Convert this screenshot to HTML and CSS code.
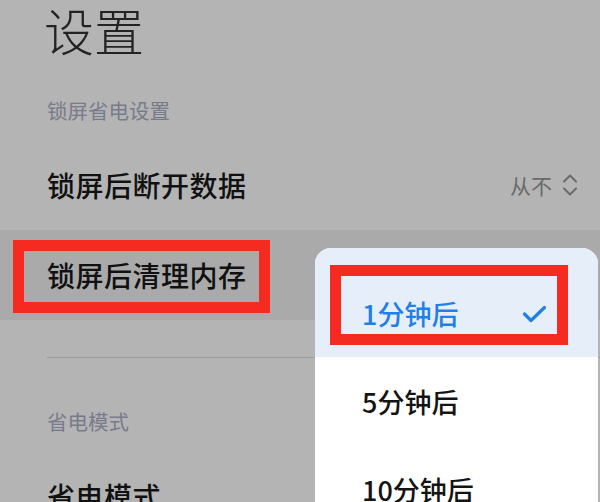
FILE: index.html
```html
<!DOCTYPE html>
<html lang="zh-CN">
<head>
<meta charset="utf-8">
<title>设置</title>
<link rel="stylesheet" href="styles.css">
</head>
<body>
<div class="page">
  <div class="title">设置</div>
  <div class="section-label">锁屏省电设置</div>
  <div class="row">
    <span class="row-text">锁屏后断开数据</span>
    <span class="row-value">从不
      <svg class="chev" width="16" height="24" viewBox="0 0 16 24"><path d="M2 8.5 L8 2.5 L14 8.5 M2 15.5 L8 21.5 L14 15.5" fill="none" stroke="#6a6a6a" stroke-width="2" stroke-linecap="round" stroke-linejoin="round"/></svg>
    </span>
  </div>
  <div class="row row-active">
    <span class="row-text">锁屏后清理内存</span>
  </div>
  <div class="divider"></div>
  <div class="section-label section-label-2">省电模式</div>
  <div class="row">
    <span class="row-text">省电模式</span>
  </div>

  <div class="popup">
    <div class="item item-selected">
      <span>1分钟后</span>
      <svg class="check" width="25" height="18" viewBox="0 0 25 18"><path d="M2.5 9 L9 15.5 L22.5 2.5" fill="none" stroke="#1f80e8" stroke-width="3.2" stroke-linecap="round" stroke-linejoin="round"/></svg>
    </div>
    <div class="item"><span>5分钟后</span></div>
    <div class="item"><span>10分钟后</span></div>
  </div>

  <div class="mark mark-1"></div>
  <div class="mark mark-2"></div>
</div>
</body>
</html>
```
FILE: styles.css
```css
html, body {
  margin: 0;
  padding: 0;
}
body {
  font-family: "Noto Sans CJK SC", "Noto Sans", sans-serif;
}
.page {
  position: relative;
  width: 600px;
  height: 502px;
  overflow: hidden;
  background: #b4b4b4;
}
.title {
  height: 64px;
  line-height: 58px;
  padding-left: 44px;
  font-size: 50px;
  font-weight: 300;
  color: #232323;
}
.section-label {
  margin-top: 30px;
  margin-bottom: 14px;
  height: 32px;
  line-height: 32px;
  padding-left: 47px;
  font-size: 20.5px;
  color: #777b8c;
}
.section-label-2 {
  margin-top: 47px;
}
.row {
  height: 90px;
  display: flex;
  align-items: center;
  justify-content: space-between;
  padding: 0 22px 0 47px;
}
.row-active {
  background: #aaaaaa;
}
.row-text {
  font-size: 28px;
  font-weight: 500;
  letter-spacing: 0.5px;
  color: #111111;
}
.row-value {
  display: flex;
  align-items: center;
  gap: 10px;
  font-size: 21px;
  color: #6a6a6a;
}
.divider {
  margin: 37px 0 0 47px;
  height: 1px;
  background: #9c9c9c;
}
.popup {
  position: absolute;
  left: 315px;
  top: 248px;
  width: 283px;
  height: 300px;
  background: #ffffff;
  border-radius: 16px 16px 0 0;
  overflow: hidden;
}
.item {
  height: 88px;
  display: flex;
  align-items: center;
  justify-content: space-between;
  padding: 0 51px 0 47px;
  font-size: 27px;
  font-weight: 500;
  color: #141414;
}
.item-selected {
  height: 87px;
  padding-top: 22px;
  background: #e6eefa;
  color: #1f80e8;
}
.mark {
  position: absolute;
  border: 11px solid #f52a20;
}
.mark-1 {
  left: 13px;
  top: 240px;
  width: 235px;
  height: 51px;
}
.mark-2 {
  left: 330px;
  top: 265px;
  width: 216px;
  height: 58px;
}
```
